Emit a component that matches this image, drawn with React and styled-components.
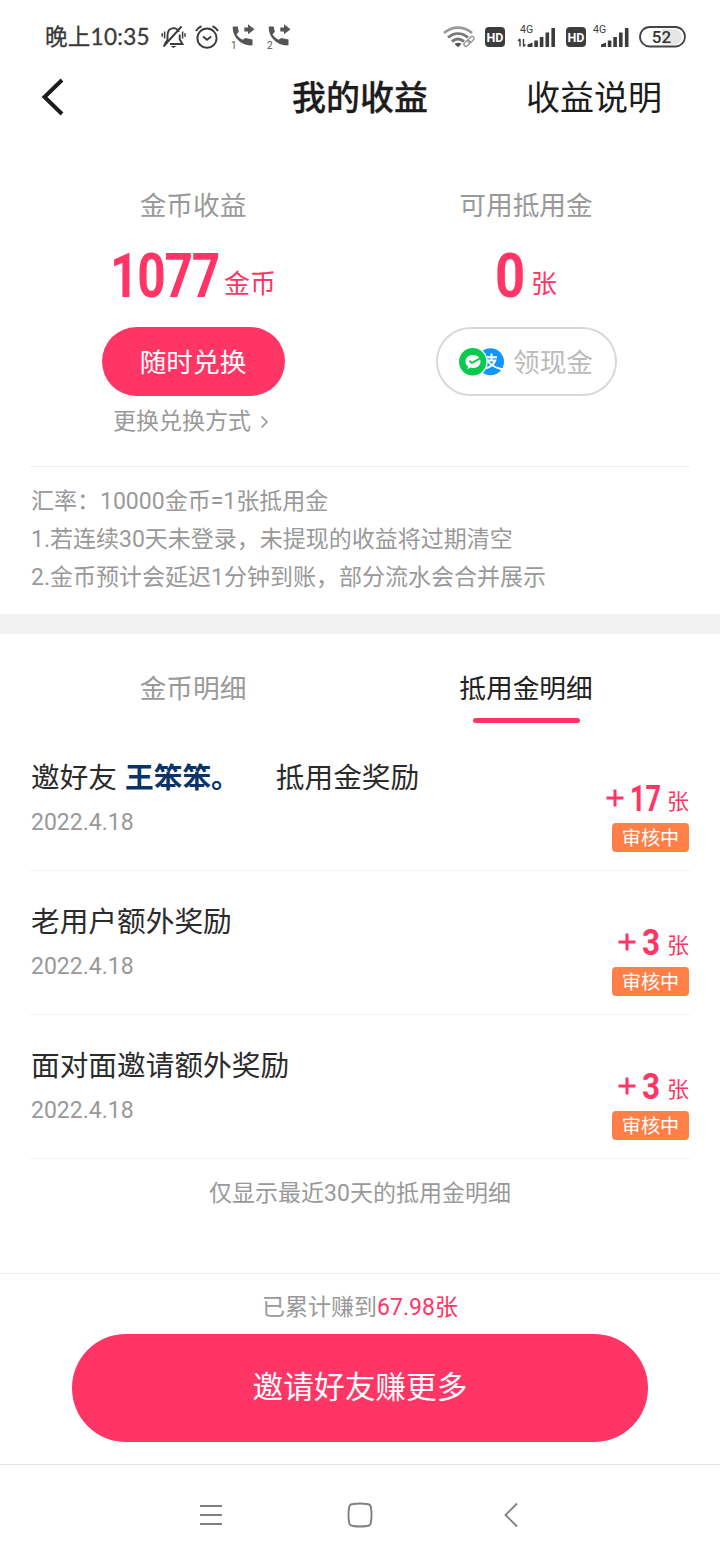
import React from "react";
import styled, { createGlobalStyle } from "styled-components";

const pink = "#ff3565";

const Global = createGlobalStyle`
  * { box-sizing: border-box; }
  body { margin: 0; background: #fff; }
  button { border: 0; padding: 0; background: none; font: inherit; color: inherit; }
  svg { display: block; flex: none; }
`;

const Page = styled.div`
  width: 720px;
  height: 1560px;
  display: flex;
  flex-direction: column;
  overflow: hidden;
  background: #fff;
  color: #2b2b2b;
  font-family: Roboto, "Noto Sans CJK SC", sans-serif;
  white-space: nowrap;
`;

const StatusBar = styled.div`
  height: 64px;
  padding: 10px 34px 0 45px;
  display: flex;
  justify-content: space-between;
  align-items: center;
`;

const StatusSide = styled.div`
  display: flex;
  align-items: center;
`;

const StatusIcon = styled.span`
  margin-left: ${(p) => p.$gap}px;
`;

const Clock = styled.span`
  width: 116px;
  font: 400 22.5px/30px Lato, "Noto Sans CJK SC", sans-serif;
  color: #3a3a3a;
  -webkit-text-stroke: 0.3px #3a3a3a;
  letter-spacing: 0.3px;
`;

const Header = styled.header`
  height: 66px;
  padding: 1px 58px 0 40px;
  display: grid;
  grid-template-columns: 253px 136px 1fr;
  align-items: center;
  font-size: 34px;
  line-height: 44px;
  color: #1c1c1c;
`;

const BackIcon = styled.svg`
  margin-top: -2px;
`;

const PageTitle = styled.h1`
  margin: 0 0 0 -1px;
  font-size: 34px;
  font-weight: 500;
  -webkit-text-stroke: 0.3px #1c1c1c;
`;

const HelpLink = styled.span`
  justify-self: end;
`;

const Balances = styled.section`
  height: 337px;
  margin: 0 30px;
  padding: 56px 0 0;
  border-bottom: 1px solid #f0f0f0;
  display: grid;
  grid-template-columns: 326px 340px;
`;

const Balance = styled.div`
  display: flex;
  flex-direction: column;
  align-items: center;
`;

const Label = styled.div`
  font-size: 26.7px;
  line-height: 41px;
  height: 40px;
  color: #999;
`;

const Amount = styled.div`
  height: 101px;
  padding-top: 15px;
  display: flex;
  align-items: flex-start;
  line-height: 70px;
  color: ${pink};
`;

const Digits = styled.span`
  display: inline-block;
  width: ${(p) => p.$width}px;
  font-size: ${(p) => p.$size}px;
  font-weight: 700;
  letter-spacing: ${(p) => p.$gap || 0}px;
  transform: scaleX(${(p) => p.$squeeze || 0.8});
  transform-origin: left;
`;

const Unit = styled.span`
  margin-top: ${(p) => p.$drop}px;
  font-size: ${(p) => p.$size}px;
`;

const Pill = styled.button`
  height: 69px;
  width: ${(p) => (p.$outline ? 181 : 183)}px;
  border-radius: 35px;
  display: flex;
  align-items: center;
  justify-content: center;
  gap: 8px;
  font-size: 26.7px;
  line-height: 40px;
  color: ${(p) => (p.$outline ? "#bbb" : "#fff")};
  background: ${(p) => (p.$outline ? "#fff" : pink)};
  border: ${(p) => (p.$outline ? "2px solid #d9d9d9" : "0")};
`;

const PillText = styled.span`
  padding-top: 2px;
`;

const SwitchLink = styled.div`
  height: 52px;
  padding-right: 4px;
  display: flex;
  align-items: center;
  gap: 9px;
  font-size: 23px;
  line-height: 46px;
  color: #999;
`;

const Rules = styled.section`
  height: 147px;
  padding: 16px 31px 0;
  font-size: 23px;
  line-height: 38px;
  color: #999;
`;

const Band = styled.div`
  height: 20px;
  background: #f2f2f2;
`;

const Tabs = styled.div`
  height: 93px;
  padding: 35px 30px 0;
  display: grid;
  grid-template-columns: 326px 340px;
`;

const Tab = styled.div`
  height: 54px;
  display: flex;
  flex-direction: column;
  align-items: center;
  justify-content: space-between;
  font-size: 26.7px;
  line-height: 40px;
  color: ${(p) => (p.$active ? "#222" : "#999")};
`;

const Underline = styled.i`
  width: 107px;
  height: 5px;
  border-radius: 3px;
  background: ${pink};
`;

const Record = styled.article`
  height: 144px;
  margin: 0 30px;
  padding: 29px 1px 0;
  border-bottom: 1px solid #f3f3f3;
  display: flex;
  justify-content: space-between;
`;

const RecordTitle = styled.div`
  height: 44px;
  font-size: 28.7px;
  line-height: 44px;
  color: #2b2b2b;
  white-space: pre;
`;

const Friend = styled.b`
  margin: 0 36px 0 8px;
  font-weight: 700;
  color: #0a3468;
`;

const RecordDate = styled.div`
  font-size: 23px;
  line-height: 46px;
  color: #999;
`;

const Reward = styled.div`
  padding-top: 20px;
  display: flex;
  flex-direction: column;
  align-items: flex-end;
`;

const RewardValue = styled.div`
  height: 47px;
  display: flex;
  align-items: flex-start;
  line-height: 46px;
  color: ${pink};
`;

const Plus = styled.svg`
  margin-right: 6px;
  margin-top: 13px;
`;

const Badge = styled.span`
  width: 77px;
  height: 29px;
  border-radius: 4px;
  background: #ff7f47;
  color: #fff;
  font-size: 19.2px;
  line-height: 31px;
  text-align: center;
`;

const Note = styled.div`
  height: 114px;
  padding-top: 16px;
  text-align: center;
  font-size: 23px;
  line-height: 38px;
  color: #999;
`;

const Footer = styled.footer`
  height: 191px;
  padding-top: 15px;
  border-top: 1px solid #f0f0f0;
  display: flex;
  flex-direction: column;
  align-items: center;
`;

const Total = styled.div`
  height: 45px;
  font-size: 23px;
  line-height: 38px;
  color: #999;
  em { font-style: normal; color: ${pink}; }
`;

const InviteButton = styled.button`
  width: 576px;
  height: 108px;
  padding-bottom: 7px;
  border-radius: 54px;
  background: ${pink};
  color: #fff;
  font-size: 30.7px;
`;

const NavBar = styled.nav`
  height: 96px;
  padding: 5px 198px 0;
  border-top: 1px solid #e2e2e2;
  display: flex;
  justify-content: space-between;
  align-items: center;
`;

const Small = styled.text`
  font-family: Roboto, sans-serif;
  font-size: ${(p) => p.$size}px;
  font-weight: ${(p) => p.$weight || 400};
`;

const MutedBell = () => (
  <svg width="25" height="24" viewBox="0 0 25 24" fill="none" stroke="#3c3c3c" strokeWidth="1.9">
    <path d="M6.5 16.5V10.5C6.5 6.2 8.8 3.3 12.5 3.1C15.5 3.2 17 4.8 17.8 7M18.7 9.5V14.5L21.5 19H9" />
    <path d="M20.5 1.5L2.5 21.5M3.5 19L6.500 15" />
    <path d="M9.5 21H15.5L12.5 23Z" fill="#3c3c3c" stroke="none" />
    <path d="M3.6 6.5V13.5M1.2 8.2V11.8M21.6 6.5V13.5M24 8.2V11.8" strokeWidth="1.5" />
  </svg>
);

const Alarm = () => (
  <svg width="24" height="24" viewBox="0 0 24 24" fill="none" stroke="#3c3c3c" strokeWidth="2">
    <circle cx="12" cy="13.2" r="9.6" />
    <path d="M8 11.5L12 14.8L16.2 11.5M1 6C2 3.8 4 2.2 6.5 1.2M23 6C22 3.8 20 2.2 17.5 1.2" />
  </svg>
);

const CallForward = ({ n }) => (
  <svg width="24" height="26" viewBox="0 0 24 26" fill="#555">
    <path d="M1.8 2.5H6.7L7.8 8L5.5 10.2C7 12.5 9 14.5 11.7 15.8L14.3 14L21.5 15.6V21.3C11 22.3 1 13.5 1.8 2.5Z" />
    <path d="M13.3 3.5H17V0.2L23.5 5.3L17 10.3V7.5H13.3Z" />
    <Small x="0" y="24.5" $size={10}>{n}</Small>
  </svg>
);

const Wifi = () => (
  <svg width="33" height="24" viewBox="0 0 33 24" fill="none" stroke="#777" strokeWidth="2.9">
    <path d="M1 8C9.5 0.8 20.5 0.8 29 8" stroke="#999" />
    <path d="M5 12.5C11.2 7.3 18.8 7.3 25 12.5" />
    <path d="M9 16.5C13 13.3 17 13.3 21 16.5" />
    <path d="M11.5 19Q15 16.5 18.5 19L15 22.2Z" fill="#555" stroke="none" />
    <g strokeWidth="3.5" stroke="#fff"><path d="M22 21L31 12" /></g>
    <g stroke="#999" strokeWidth="1.4">
      <rect x="20.5" y="16.3" width="7" height="4" rx="2" transform="rotate(-45 24 18.3)" />
      <rect x="24.5" y="12.5" width="7" height="4" rx="2" transform="rotate(-45 28 14.5)" />
    </g>
  </svg>
);

const Hd = () => (
  <svg width="20" height="20" viewBox="0 0 20 20">
    <rect width="20" height="20" rx="4" fill="#3c3c3c" />
    <Small x="10" y="14.5" $size={12.5} $weight={700} textAnchor="middle" fill="#fff">HD</Small>
  </svg>
);

const Signal = ({ data }) => (
  <svg width={data ? 39 : 36} height="26" viewBox={data ? "0 0 39 26" : "0 0 36 26"} fill="#3c3c3c">
    <Small x={data ? 3 : 0} y="8.5" $size={10.5}>4G</Small>
    {data && <path d="M3 22.5V15M1 17L3 15M6.5 15V22.5M8.5 20.5L6.5 22.5" fill="none" stroke="#3c3c3c" strokeWidth="1.4" />}
    <path d={data
      ? "M10.5 23V20.5L15.5 18.5V23ZM17.3 16.5H20.9V23H17.3ZM22.8 13H26.4V23H22.8ZM28.5 8.500H32.1V23H28.5ZM34.4 4H38V23H34.4Z"
      : "M8 23V20.5L13 18.5V23ZM14.8 16.5H18.4V23H14.8ZM20.3 13H23.9V23H20.3ZM26 8.500H29.6V23H26ZM31.9 4H35.5V23H31.9Z"} />
  </svg>
);

const Battery = () => (
  <svg width="47" height="22" viewBox="0 0 47 22">
    <rect x="1" y="1" width="45" height="19.5" rx="9.7" fill="#fff" stroke="#444" strokeWidth="1.8" />
    <path d="M23 3H35A7.7 7.7 0 0 1 35 18.5H23Z" fill="#e6e6e6" />
    <Small x="22.5" y="16.7" $size={17} $weight={500} textAnchor="middle" fill="#333">52</Small>
  </svg>
);

const PayLogos = () => (
  <svg width="46" height="28" viewBox="0 0 46 28">
    <circle cx="31.5" cy="13.8" r="13.5" fill="#1296fa" />
    <path d="M27 9.2H38M32.5 5.5V12.2M28 12.5H36.3C34.5 16.5 31.5 19 27 20.3M28.5 13C32 17.5 37 20 44 21.5" fill="none" stroke="#fff" strokeWidth="1.9" />
    <circle cx="13.7" cy="13.8" r="15" fill="#fff" />
    <circle cx="13.7" cy="13.8" r="13.7" fill="#09c94f" />
    <path d="M14 7C9.7 7 6.5 9.8 6.5 13.4C6.5 15.5 7.5 17.3 9.1 18.5L8.4 21.2L11.3 19.6C17 21 21.5 17.8 21.5 13.4C21.5 9.8 18.3 7 14 7Z" fill="#fff" />
    <path d="M10.5 12.7L13 14.9L21.5 10.2" fill="none" stroke="#09c94f" strokeWidth="1.9" />
  </svg>
);

const records = [
  { title: "邀好友", friend: "王笨笨。", tail: "抵用金奖励", value: "17", width: 37, squeeze: 0.73 },
  { title: "老用户额外奖励", value: "3", width: 25, squeeze: 0.85 },
  { title: "面对面邀请额外奖励", value: "3", width: 25, squeeze: 0.85 },
];

export default function App() {
  return (
    <Page>
      <Global />
      <StatusBar>
        <StatusSide>
          <Clock>晚上10:35</Clock>
          <MutedBell />
          <StatusIcon $gap={9}><Alarm /></StatusIcon>
          <StatusIcon $gap={12}><CallForward n="1" /></StatusIcon>
          <StatusIcon $gap={12}><CallForward n="2" /></StatusIcon>
        </StatusSide>
        <StatusSide>
          <Wifi />
          <StatusIcon $gap={9}><Hd /></StatusIcon>
          <StatusIcon $gap={12}><Signal data /></StatusIcon>
          <StatusIcon $gap={10}><Hd /></StatusIcon>
          <StatusIcon $gap={7}><Signal /></StatusIcon>
          <StatusIcon $gap={10}><Battery /></StatusIcon>
        </StatusSide>
      </StatusBar>
      <Header>
        <BackIcon width="26" height="38" viewBox="0 0 26 38" fill="none" stroke="#1c1c1c" strokeWidth="4">
          <path d="M22 2L4.5 19L22 36" />
        </BackIcon>
        <PageTitle>我的收益</PageTitle>
        <HelpLink>收益说明</HelpLink>
      </Header>
      <Balances>
        <Balance>
          <Label>金币收益</Label>
          <Amount>
            <Digits $size={62} $width={114} $gap={-1.5}>1077</Digits>
            <Unit $size={26} $drop={8}>金币</Unit>
          </Amount>
          <Pill><PillText>随时兑换</PillText></Pill>
          <SwitchLink>
            更换兑换方式
            <svg width="9" height="14" viewBox="0 0 9 14" fill="none" stroke="#999" strokeWidth="1.7"><path d="M1.5 1.5L7 7L1.5 12.5" /></svg>
          </SwitchLink>
        </Balance>
        <Balance>
          <Label>可用抵用金</Label>
          <Amount>
            <Digits $size={62} $width={36} $squeeze={0.85}>0</Digits>
            <Unit $size={26} $drop={8}>张</Unit>
          </Amount>
          <Pill $outline><PayLogos /><PillText>领现金</PillText></Pill>
        </Balance>
      </Balances>
      <Rules>
        <div>汇率：10000金币=1张抵用金</div>
        <div>1.若连续30天未登录，未提现的收益将过期清空</div>
        <div>2.金币预计会延迟1分钟到账，部分流水会合并展示</div>
      </Rules>
      <Band />
      <Tabs>
        <Tab>金币明细</Tab>
        <Tab $active>抵用金明细<Underline /></Tab>
      </Tabs>
      {records.map((r) => (
        <Record key={r.title}>
          <div>
            <RecordTitle>{r.title}{r.friend && <Friend>{r.friend}</Friend>}{r.tail}</RecordTitle>
            <RecordDate>2022.4.18</RecordDate>
          </div>
          <Reward>
            <RewardValue>
              <Plus width="18" height="18" viewBox="0 0 18 18" stroke={pink} strokeWidth="3"><path d="M9 0.5V17.5M0.5 9H17.5" /></Plus>
              <Digits $size={37} $width={r.width} $squeeze={r.squeeze}>{r.value}</Digits>
              <Unit $size={22} $drop={3}>张</Unit>
            </RewardValue>
            <Badge>审核中</Badge>
          </Reward>
        </Record>
      ))}
      <Note>仅显示最近30天的抵用金明细</Note>
      <Footer>
        <Total>已累计赚到<em>67.98张</em></Total>
        <InviteButton>邀请好友赚更多</InviteButton>
      </Footer>
      <NavBar>
        <svg width="26" height="26" viewBox="0 0 26 26" stroke="#808080" strokeWidth="1.8"><path d="M2 4H24M2 13H24M2 22H24" /></svg>
        <svg width="26" height="26" viewBox="0 0 26 26" fill="none" stroke="#808080" strokeWidth="1.9"><path d="M6 2Q13 1 20 2Q24 2.5 24 6Q25 13 24 20Q23.5 24 20 24Q13 25 6 24Q2 23.5 2 20Q1 13 2 6Q2.5 2 6 2Z" /></svg>
        <svg width="26" height="26" viewBox="0 0 26 26" fill="none" stroke="#808080" strokeWidth="1.9"><path d="M21 1.5L9.5 13L21 24.5" /></svg>
      </NavBar>
    </Page>
  );
}
